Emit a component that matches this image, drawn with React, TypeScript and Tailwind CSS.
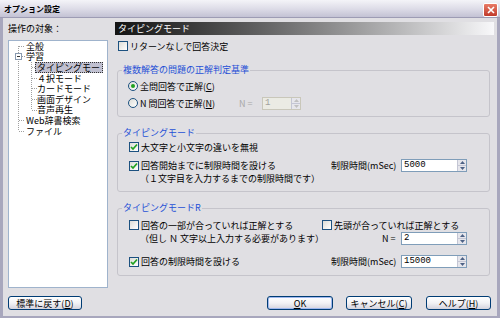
import React from "react";

function CB({ checked }: { checked?: boolean }) {
  return (
    <span className="w-[10px] h-[10px] shrink-0 border border-[#1c5180] bg-linear-to-br from-[#dcdcd7] to-white flex items-center justify-center">
      {checked && (
        <svg width="8" height="8" viewBox="0 0 8 8">
          <path d="M1 4 L3 6 L7 1.5" stroke="#21a121" strokeWidth="1.7" fill="none" />
        </svg>
      )}
    </span>
  );
}

function Radio({ checked }: { checked?: boolean }) {
  return (
    <span className="w-[10px] h-[10px] shrink-0 rounded-full border border-[#1c5180] bg-linear-to-br from-[#dcdcd7] to-white flex items-center justify-center">
      {checked && <span className="w-[4px] h-[4px] rounded-full bg-[#21a121]" />}
    </span>
  );
}

function Spin({ value, w, disabled }: { value: string; w: string; disabled?: boolean }) {
  return (
    <div
      className={`${w} h-[13px] flex border ${
        disabled ? "border-[#c9c7ba] bg-[#ebebe4] text-[#a0a0a0]" : "border-[#7f9db9] bg-white text-black"
      }`}
    >
      <div className="flex-1 flex items-center pl-[2px] font-['Liberation_Mono',monospace] text-[9px]">{value}</div>
      <div className="w-[9px] flex flex-col border-l border-[#c4c6d4]">
        <div className="flex-1 flex items-center justify-center bg-[#e6e6ec] border-b border-[#c4c6d4]">
          <svg width="5" height="3" viewBox="0 0 5 3">
            <path d="M0 3 L2.5 0 L5 3Z" fill={disabled ? "#c0c0c0" : "#4d6185"} />
          </svg>
        </div>
        <div className="flex-1 flex items-center justify-center bg-[#e6e6ec]">
          <svg width="5" height="3" viewBox="0 0 5 3">
            <path d="M0 0 L2.5 3 L5 0Z" fill={disabled ? "#c0c0c0" : "#4d6185"} />
          </svg>
        </div>
      </div>
    </div>
  );
}

function Btn({ children, w, def }: { children: React.ReactNode; w: string; def?: boolean }) {
  return (
    <div
      className={`${w} h-[14px] rounded-[3px] border border-[#003c74] bg-linear-to-b from-white via-[#f2f2f5] to-[#d4d3dd] flex items-center justify-center ${
        def ? "shadow-[inset_0_0_0_1px_#9fb8ee]" : ""
      }`}
    >
      {children}
    </div>
  );
}

function Legend({ children }: { children: React.ReactNode }) {
  return <legend className="ml-[4px] px-[1px] h-[12px] leading-[12px] text-[#1f4fd6]">{children}</legend>;
}

const rows: { label: string; level: number; selected?: boolean }[] = [
  { label: "全般", level: 0 },
  { label: "学習", level: 0 },
  { label: "タイピングモー", level: 1, selected: true },
  { label: "４択モード", level: 1 },
  { label: "カードモード", level: 1 },
  { label: "画面デザイン", level: 1 },
  { label: "音声再生", level: 1 },
  { label: "Web辞書検索", level: 0 },
  { label: "ファイル", level: 0 },
];

export default function App() {
  return (
    <div className="w-[500px] h-[318px] flex flex-col bg-[#e0dfe3] font-['Noto_Sans_CJK_JP',sans-serif] text-[9px] leading-none text-black overflow-hidden">
      {/* title bar */}
      <div className="h-[18px] shrink-0 flex items-start bg-linear-to-b from-[#f4f4f8] via-[#dedde8] to-[#c3c2d4] border-b border-[#9d9cb4]">
        <span className="ml-[4px] mt-[5px] text-[8px] font-bold">オプション設定</span>
        <div className="ml-auto mr-[2px] mt-[3px] w-[15px] h-[14px] rounded-[2px] border border-white bg-linear-to-b from-[#e87a66] to-[#c0392b] flex items-center justify-center">
          <svg width="8" height="8" viewBox="0 0 8 8">
            <path d="M1 1 L7 7 M7 1 L1 7" stroke="white" strokeWidth="1.6" />
          </svg>
        </div>
      </div>

      {/* body */}
      <div className="flex-1 flex border-l-[3px] border-r-[3px] border-b-[2px] border-[#a8a7bd]">
        {/* left column */}
        <div className="ml-[5px] w-[100px] flex flex-col pt-[4px]">
          <div className="h-[13px] flex items-center">操作の対象：</div>
          <div className="mt-[5px] h-[248px] bg-white border border-[#9fb3cc] relative">
            <svg className="absolute left-0 top-0" width="98" height="100" viewBox="0 0 98 100">
              <g stroke="#a0a0a0" strokeWidth="1" strokeDasharray="1 1" fill="none">
                <path d="M9.5 5 V12" />
                <path d="M9.5 20 V90" />
                <path d="M10 5.5 H16" />
                <path d="M10 79.5 H16" />
                <path d="M10 90.5 H16" />
                <path d="M22.5 21 V69" />
                <path d="M23 26.5 H28" />
                <path d="M23 37.5 H28" />
                <path d="M23 47.5 H28" />
                <path d="M23 58.5 H28" />
                <path d="M23 69.5 H28" />
              </g>
              <rect x="6.5" y="12.5" width="6" height="6" fill="white" stroke="#8a9bb0" />
              <path d="M8 15.5 H11" stroke="#333" />
              <path d="M13 15.5 H16" stroke="#a0a0a0" strokeDasharray="1 1" />
            </svg>
            <div className="relative flex flex-col">
              {rows.map((r) => (
                <div
                  key={r.label}
                  className={`h-[10.6px] flex items-center ${r.level === 0 ? "pl-[17px]" : r.selected ? "pl-[26px]" : "pl-[28px]"}`}
                >
                  {r.selected ? (
                    <span className="h-full w-[68px] pl-[2px] flex items-center bg-[#c0c0d0] outline outline-1 outline-dotted outline-[#333] -outline-offset-1">
                      {r.label}
                    </span>
                  ) : (
                    <span>{r.label}</span>
                  )}
                </div>
              ))}
            </div>
          </div>
          <div className="mt-[8px]">
            <Btn w="w-[74px]">
              標準に戻す(<span className="underline">D</span>)
            </Btn>
          </div>
        </div>

        {/* right column */}
        <div className="ml-[7px] w-[379px] flex flex-col pt-[4px]">
          <div className="h-[13px] flex items-center pl-[3px] text-white bg-linear-to-r from-[#141414] to-[#f8f8fa]">
            タイピングモード
          </div>
          <div className="mt-[5px] h-[12px] flex items-center gap-[2px] pl-[3px]">
            <CB />
            <span>リターンなしで回答決定</span>
          </div>

          {/* group 1 */}
          <fieldset className="mt-[12px] ml-[2px] w-[373px] border border-[#c5c4cb] rounded-[3px]">
            <Legend>複数解答の問題の正解判定基準</Legend>
            <div className="pl-[10px] pb-[6px] flex flex-col">
              <div className="mt-[4px] h-[12px] flex items-center gap-[2px]">
                <Radio checked />
                <span>
                  全問回答で正解(<span className="underline">C</span>)
                </span>
              </div>
              <div className="mt-[4px] h-[14px] flex items-center">
                <div className="w-[111px] flex items-center gap-[2px]">
                  <Radio />
                  <span>
                    N 問回答で正解(<span className="underline">N</span>)
                  </span>
                </div>
                <span className="w-[23px] text-[#a8a8a8]">N =</span>
                <Spin value="1" w="w-[39px]" disabled />
              </div>
            </div>
          </fieldset>

          {/* group 2 */}
          <fieldset className="mt-[10px] ml-[2px] w-[373px] border border-[#c5c4cb] rounded-[3px]">
            <Legend>タイピングモード</Legend>
            <div className="pl-[11px] pb-[7px] flex flex-col">
              <div className="mt-[2px] h-[12px] flex items-center gap-[2px]">
                <CB checked />
                <span>大文字と小文字の違いを無視</span>
              </div>
              <div className="mt-[6px] h-[13px] flex items-center">
                <div className="w-[202px] flex items-center gap-[2px]">
                  <CB checked />
                  <span>回答開始までに制限時間を設ける</span>
                </div>
                <span className="w-[70px]">制限時間(mSec)</span>
                <Spin value="5000" w="w-[66px]" />
              </div>
              <div className="h-[12px] flex items-center pl-[11px]">（１文字目を入力するまでの制限時間です）</div>
            </div>
          </fieldset>

          {/* group 3 */}
          <fieldset className="mt-[10px] ml-[2px] w-[373px] border border-[#c5c4cb] rounded-[3px]">
            <Legend>タイピングモードR</Legend>
            <div className="pl-[11px] pb-[7px] flex flex-col">
              <div className="mt-[5px] h-[12px] flex items-center">
                <div className="w-[193px] flex items-center gap-[2px]">
                  <CB />
                  <span>回答の一部が合っていれば正解とする</span>
                </div>
                <div className="flex items-center gap-[2px]">
                  <CB />
                  <span>先頭が合っていれば正解とする</span>
                </div>
              </div>
              <div className="mt-[1px] h-[13px] flex items-center">
                <span className="w-[253px] pl-[11px]">（但し Ｎ 文字以上入力する必要があります）</span>
                <span className="w-[19px]">N =</span>
                <Spin value="2" w="w-[66px]" />
              </div>
              <div className="mt-[10px] h-[13px] flex items-center">
                <div className="w-[202px] flex items-center gap-[2px]">
                  <CB checked />
                  <span>回答の制限時間を設ける</span>
                </div>
                <span className="w-[70px]">制限時間(mSec)</span>
                <Spin value="15000" w="w-[66px]" />
              </div>
            </div>
          </fieldset>

          <div className="mt-[20px] flex items-center">
            <div className="ml-[152px]">
              <Btn w="w-[66px]" def>
                <span className="underline">O</span>K
              </Btn>
            </div>
            <div className="ml-[13px]">
              <Btn w="w-[66px]">
                キャンセル(<span className="underline">C</span>)
              </Btn>
            </div>
            <div className="ml-[14px]">
              <Btn w="w-[65px]">
                ヘルプ(<span className="underline">H</span>)
              </Btn>
            </div>
          </div>
        </div>
      </div>
    </div>
  );
}
